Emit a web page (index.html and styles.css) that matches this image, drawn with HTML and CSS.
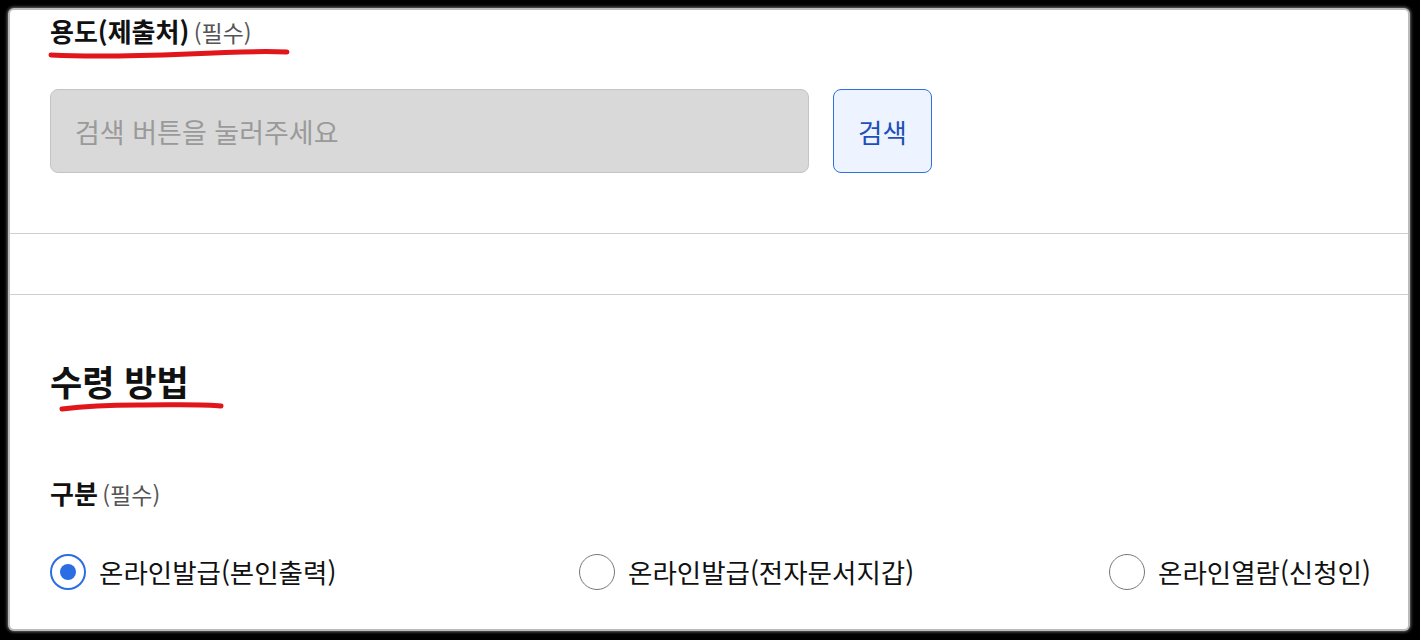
FILE: index.html
```html
<!DOCTYPE html>
<html lang="ko">
<head>
<meta charset="utf-8">
<link rel="stylesheet" href="styles.css">
</head>
<body>
<div class="frame">
  <div class="sheet">
    <section class="block top">
      <div class="field-title">
        <span class="label">용도(제출처)</span> <span class="req">(필수)</span>
        <svg class="mark mark1" width="244" height="12" viewBox="0 0 244 12"><path d="M3 7 C 40 9, 90 8, 140 6 C 180 4, 215 3, 239 4" fill="none" stroke="#e0161b" stroke-width="5" stroke-linecap="round"/></svg>
      </div>
      <div class="search-row">
        <div class="input">검색 버튼을 눌러주세요</div>
        <button class="btn">검색</button>
      </div>
    </section>
    <div class="gap"></div>
    <section class="block bottom">
      <h2 class="section-title">수령 방법
        <svg class="mark mark2" width="168" height="12" viewBox="0 0 168 12"><path d="M4 8 C 20 6, 40 4, 80 4 C 120 4, 145 3, 163 5" fill="none" stroke="#e0161b" stroke-width="5" stroke-linecap="round"/></svg>
      </h2>
      <div class="field-title small">
        <span class="label">구분</span> <span class="req">(필수)</span>
      </div>
      <div class="radios">
        <label class="radio"><span class="dot checked"></span>온라인발급(본인출력)</label>
        <label class="radio"><span class="dot"></span>온라인발급(전자문서지갑)</label>
        <label class="radio"><span class="dot"></span>온라인열람(신청인)</label>
      </div>
    </section>
  </div>
</div>
</body>
</html>
```
FILE: styles.css
```css
html, body {
  margin: 0;
  padding: 0;
  background: #000;
}
body {
  font-family: "Noto Sans CJK KR", "Noto Sans", sans-serif;
  color: #111;
}
.frame {
  width: 1420px;
  height: 640px;
  padding: 10px 12px 11px 10px;
  box-sizing: border-box;
  background: #000;
}
.sheet {
  background: #fff;
  height: 100%;
  border-radius: 4px;
  box-shadow: 0 0 0 2px #bbb, 0 0 3px 3px #666;
  overflow: hidden;
}
.block {
  padding: 0 40px;
}
.top {
  padding-top: 1px;
  height: 224px;
  box-sizing: border-box;
  border-bottom: 1px solid #cfcfcf;
}
.gap {
  height: 60px;
  border-bottom: 1px solid #cfcfcf;
}
.field-title {
  position: relative;
  display: inline-block;
  line-height: 40px;
}
.label {
  font-size: 26px;
  font-weight: 700;
  color: #111;
}
.req {
  font-size: 23px;
  color: #555;
}
.mark {
  position: absolute;
  left: -2px;
}
.mark1 { top: 37px; }
.mark2 { top: 42px; left: 8px; }
.search-row {
  display: flex;
  gap: 24px;
  margin-top: 34px;
}
.input {
  width: 759px;
  height: 84px;
  box-sizing: border-box;
  background: #d9d9d9;
  border: 1px solid #c4c4c4;
  border-radius: 8px;
  display: flex;
  align-items: center;
  padding-left: 24px;
  font-size: 27px;
  color: #9a9a9a;
}
.btn {
  width: 99px;
  height: 84px;
  background: #eef4ff;
  border: 1px solid #2f6fe0;
  border-radius: 8px;
  font-family: inherit;
  font-size: 26.5px;
  color: #1f4fb8;
  padding: 0;
}
.bottom {
  padding-top: 64px;
}
.section-title {
  position: relative;
  display: inline-block;
  margin: 0;
  font-size: 35px;
  font-weight: 700;
  line-height: 44px;
}
.small {
  display: block;
  margin-top: 70px;
}
.radios {
  display: grid;
  grid-template-columns: 529px 530px auto;
  margin-top: 35px;
}
.radio {
  display: flex;
  align-items: center;
  gap: 13px;
  font-size: 26.5px;
  color: #111;
  white-space: nowrap;
}
.dot {
  width: 36px;
  height: 36px;
  box-sizing: border-box;
  border: 1px solid #777;
  border-radius: 50%;
  flex: none;
  display: flex;
  align-items: center;
  justify-content: center;
}
.dot.checked {
  border: 2px solid #2b6de3;
}
.dot.checked::after {
  content: "";
  width: 16px;
  height: 16px;
  border-radius: 50%;
  background: #2b6de3;
}
```
